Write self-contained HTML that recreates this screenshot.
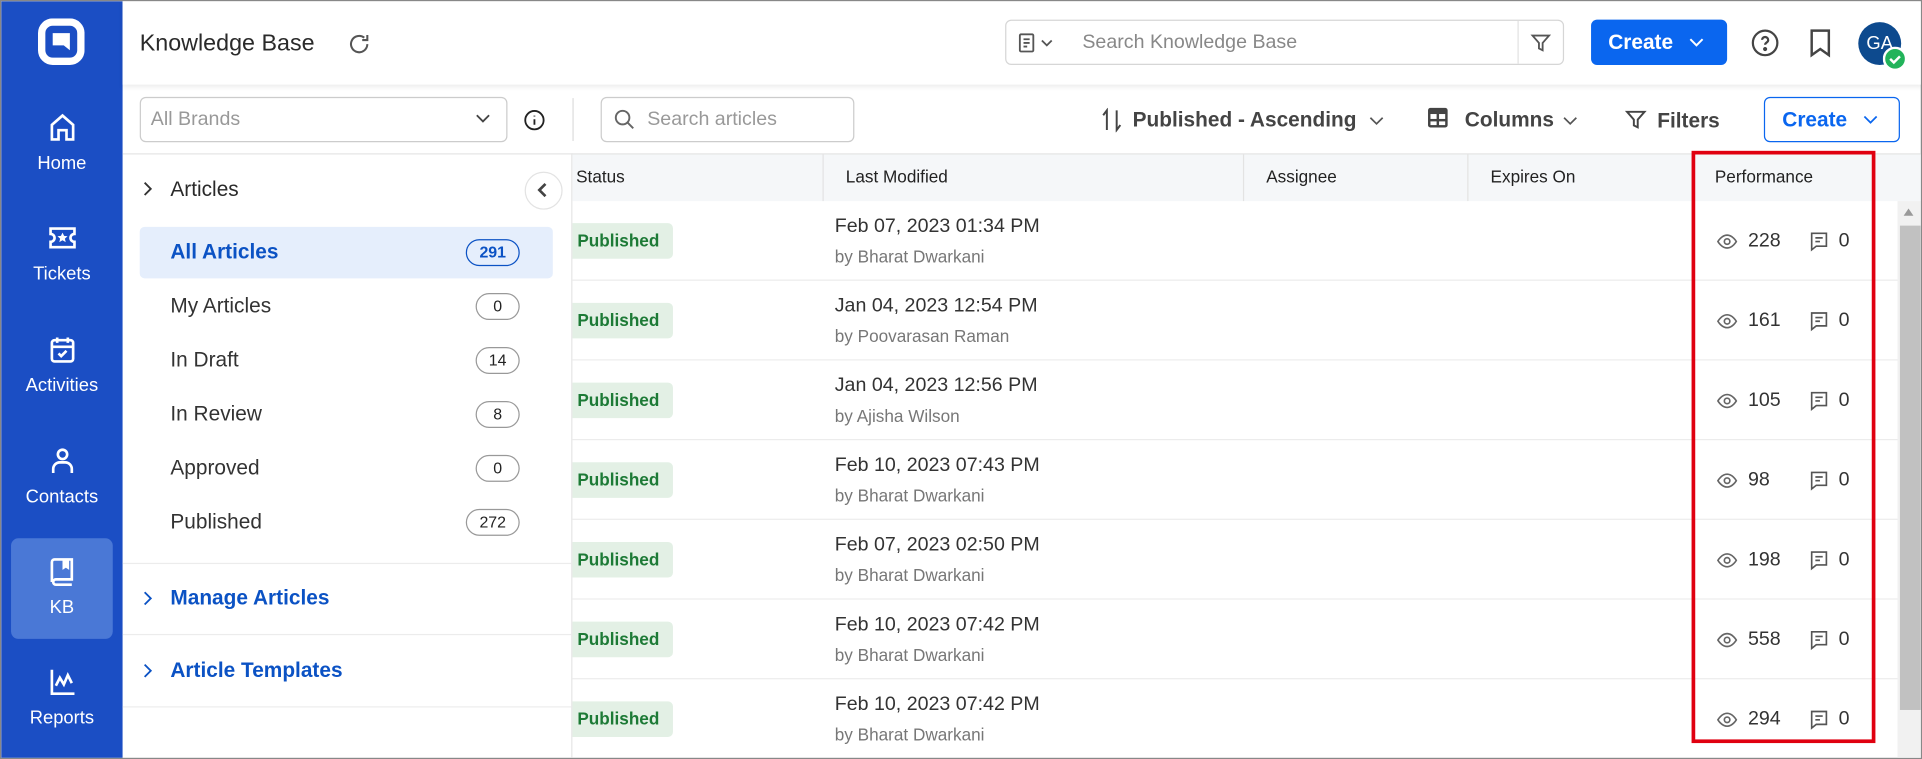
<!DOCTYPE html>
<html><head><meta charset="utf-8"><style>
*{box-sizing:border-box;margin:0;padding:0}
html,body{width:1922px;height:759px;overflow:hidden;background:#fff}
#w{position:absolute;left:0;top:0;width:1568px;height:619px;transform:scale(1.22577,1.2262);transform-origin:0 0;font-family:"Liberation Sans",sans-serif;color:#222;border:1px solid #888;overflow:hidden}
.a{position:absolute}
.sb{left:0;top:0;width:99px;height:619px;background:#1b4ec4}
.nav{position:absolute;left:0;width:99px;text-align:center;color:#fff;font-size:15px}
.nav svg{display:block;margin:0 auto}
.t{position:absolute;white-space:nowrap}
.badge{position:absolute;left:387px;width:36px;height:22px;border:1px solid #999;border-radius:11px;font-size:13px;text-align:center;line-height:20px;color:#222}
.pub{position:absolute;left:466px;width:82px;height:29px;background:#e3f0e5;color:#1d7a36;font-size:14px;font-weight:bold;line-height:29px;padding-left:4px;border-radius:0 4px 4px 0}
.d{position:absolute;left:680px;font-size:16px;color:#333}
.by{position:absolute;left:680px;font-size:14px;color:#777}
.hl{position:absolute;left:466px;width:1081px;height:1px;background:#ececec}
.num{position:absolute;font-size:16px;color:#333}
.eye{position:absolute;left:1398px}.cm{position:absolute;left:1474px}
</style></head><body><div id="w">
<div class="a sb"></div>
<svg class="a" style="left:30px;top:14px" width="38" height="38" viewBox="0 0 38 38"><rect x="3" y="3" width="32" height="32" rx="9" fill="none" stroke="#fff" stroke-width="6"/><path d="M12 12h14v14l-5-4h-9z" fill="#fff"/></svg>
<div class="nav" style="top:90px"><svg width="26" height="26" viewBox="0 0 24 24" fill="none" stroke="#fff" stroke-width="2"><path d="M4 21V10l8-7 8 7v11h-5v-7H9v7z"/></svg><div style="margin-top:8px">Home</div></div>
<div class="nav" style="top:180px"><svg width="26" height="26" viewBox="0 0 24 24" fill="none" stroke="#fff" stroke-width="2"><path d="M3 5h18v4a3 3 0 000 6v4H3v-4a3 3 0 000-6z"/><path d="M12 8l1.2 2.5 2.6.3-2 1.8.6 2.6-2.4-1.4-2.4 1.4.6-2.6-2-1.8 2.6-.3z" fill="#fff" stroke="none"/></svg><div style="margin-top:8px">Tickets</div></div>
<div class="nav" style="top:271px"><svg width="26" height="26" viewBox="0 0 24 24" fill="none" stroke="#fff" stroke-width="2"><rect x="4" y="5" width="16" height="16" rx="2"/><path d="M8 3v4M16 3v4M4 10h16M9 15l2 2 4-4"/></svg><div style="margin-top:8px">Activities</div></div>
<div class="nav" style="top:362px"><svg width="26" height="26" viewBox="0 0 24 24" fill="none" stroke="#fff" stroke-width="2"><circle cx="12" cy="7" r="3.5"/><path d="M5 21v-3a5 5 0 015-5h4a5 5 0 015 5v3"/></svg><div style="margin-top:8px">Contacts</div></div>
<div class="a" style="left:8px;top:438px;width:83px;height:82px;background:#4a78d6;border-radius:6px"></div>
<div class="nav" style="top:452px"><svg width="26" height="26" viewBox="0 0 24 24" fill="none" stroke="#fff" stroke-width="2"><path d="M6 3h13v15H7a2 2 0 000 4h12M6 3a2 2 0 00-2 2v15"/><path d="M13 3v6l1.5-1 1.5 1V3" fill="#fff"/></svg><div style="margin-top:8px">KB</div></div>
<div class="nav" style="top:542px"><svg width="26" height="26" viewBox="0 0 24 24" fill="none" stroke="#fff" stroke-width="2"><path d="M4 3v18h17M7 15l3-6 3 5 3-7 3 6"/></svg><div style="margin-top:8px">Reports</div></div>

<div class="a" style="left:99px;top:0;width:1469px;height:68px;background:#fff;box-shadow:0 2px 4px rgba(0,0,0,.08)"></div>
<div class="t" style="left:113px;top:24px;font-size:19px;color:#2a2a2a">Knowledge Base</div>
<svg class="a" style="left:282px;top:25px" width="20" height="20" viewBox="0 0 24 24" fill="none" stroke="#555" stroke-width="2"><path d="M20 12a8 8 0 11-3-6.3M20 3v5h-5"/></svg>
<div class="a" style="left:819px;top:15px;width:456px;height:37px;border:1px solid #d6d6d6;border-radius:5px"></div>
<svg class="a" style="left:830px;top:26px" width="30" height="16" viewBox="0 0 30 16" fill="none" stroke="#555" stroke-width="1.5"><rect x="1" y="1" width="11" height="14" rx="1"/><path d="M4 5h5M4 8h5M4 11h3M19 6l4 4 4-4"/></svg>
<div class="t" style="left:882px;top:25px;font-size:16px;color:#888">Search Knowledge Base</div>
<div class="a" style="left:1237px;top:16px;width:1px;height:35px;background:#e2e2e2"></div>
<svg class="a" style="left:1247px;top:25px" width="18" height="18" viewBox="0 0 24 24" fill="none" stroke="#555" stroke-width="2"><path d="M3 4h18l-7 8v8l-4-2v-6z"/></svg>
<div class="a" style="left:1297px;top:15px;width:111px;height:37px;background:#0a66ef;border-radius:5px;color:#fff;font-size:17px;font-weight:bold;line-height:37px;padding-left:14px">Create</div>
<svg class="a" style="left:1377px;top:29px" width="12" height="9" viewBox="0 0 12 9" fill="none" stroke="#fff" stroke-width="1.6"><path d="M1 2l5 5 5-5"/></svg>
<svg class="a" style="left:1427px;top:22px" width="24" height="24" viewBox="0 0 24 24" fill="none" stroke="#444" stroke-width="1.8"><circle cx="12" cy="12" r="10"/><path d="M9.5 9.5a2.5 2.5 0 115 .3c0 1.7-2.5 2-2.5 3.7"/><circle cx="12" cy="17" r=".8" fill="#444"/></svg>
<svg class="a" style="left:1474px;top:22px" width="20" height="24" viewBox="0 0 20 24" fill="none" stroke="#444" stroke-width="2"><path d="M3 2h14v20l-7-5-7 5z"/></svg>
<div class="a" style="left:1515px;top:17px;width:35px;height:35px;border-radius:50%;background:#0d4a8e;color:#fff;font-size:15px;line-height:35px;text-align:center">GA</div>
<svg class="a" style="left:1535px;top:37px" width="20" height="20" viewBox="0 0 20 20"><circle cx="10" cy="10" r="9" fill="#22b35a" stroke="#fff" stroke-width="2"/><path d="M6 10l3 3 5-5" fill="none" stroke="#fff" stroke-width="2"/></svg>

<div class="a" style="left:113px;top:78px;width:300px;height:37px;border:1px solid #ccc;border-radius:5px"></div>
<div class="t" style="left:122px;top:88px;font-size:16px;color:#999">All Brands</div>
<svg class="a" style="left:386px;top:90px" width="14" height="12" viewBox="0 0 14 12" fill="none" stroke="#444" stroke-width="1.5"><path d="M2 3l5 5 5-5"/></svg>
<svg class="a" style="left:426px;top:88px" width="18" height="18" viewBox="0 0 24 24" fill="none" stroke="#222" stroke-width="2"><circle cx="12" cy="12" r="10"/><path d="M12 11v6M12 7v1"/></svg>
<div class="a" style="left:466px;top:79px;width:1px;height:35px;background:#ddd"></div>
<div class="a" style="left:489px;top:78px;width:207px;height:37px;border:1px solid #ccc;border-radius:5px"></div>
<svg class="a" style="left:499px;top:87px" width="19" height="19" viewBox="0 0 24 24" fill="none" stroke="#666" stroke-width="2"><circle cx="10" cy="10" r="7"/><path d="M15 15l6 6"/></svg>
<div class="t" style="left:527px;top:88px;font-size:16px;color:#999">Search articles</div>
<svg class="a" style="left:897px;top:87px" width="18" height="20" viewBox="0 0 18 20" fill="none" stroke="#444" stroke-width="1.6"><path d="M5 18V2L2 6M13 2v16l3-4"/></svg>
<div class="t" style="left:923px;top:87px;font-size:17px;color:#444;font-weight:bold">Published - Ascending</div>
<svg class="a" style="left:1116px;top:93px" width="12" height="9" viewBox="0 0 12 9" fill="none" stroke="#555" stroke-width="1.4"><path d="M1 2l5 5 5-5"/></svg>
<svg class="a" style="left:1163px;top:86px" width="18" height="18" viewBox="0 0 18 18"><rect x="1" y="1" width="16" height="16" rx="2" fill="#444"/><rect x="3" y="6" width="5" height="4" fill="#fff"/><rect x="10" y="6" width="5" height="4" fill="#fff"/><rect x="3" y="12" width="5" height="3" fill="#fff"/><rect x="10" y="12" width="5" height="3" fill="#fff"/></svg>
<div class="t" style="left:1194px;top:87px;font-size:17px;color:#444;font-weight:bold">Columns</div>
<svg class="a" style="left:1274px;top:93px" width="12" height="9" viewBox="0 0 12 9" fill="none" stroke="#555" stroke-width="1.4"><path d="M1 2l5 5 5-5"/></svg>
<svg class="a" style="left:1324px;top:87px" width="19" height="19" viewBox="0 0 24 24" fill="none" stroke="#444" stroke-width="2"><path d="M3 4h18l-7 8v8l-4-2v-6z"/></svg>
<div class="t" style="left:1351px;top:88px;font-size:17px;color:#444;font-weight:bold">Filters</div>
<div class="a" style="left:1438px;top:78px;width:111px;height:37px;border:1px solid #0a66ef;border-radius:5px;color:#0a66ef;font-size:17px;font-weight:bold;line-height:35px;padding-left:14px">Create</div>
<svg class="a" style="left:1519px;top:92px" width="12" height="9" viewBox="0 0 12 9" fill="none" stroke="#0a66ef" stroke-width="1.4"><path d="M1 2l5 5 5-5"/></svg>

<div class="a" style="left:99px;top:124px;width:1469px;height:1px;background:#e4e4e4"></div>
<div class="a" style="left:465px;top:124px;width:1px;height:495px;background:#e6e6e6"></div>
<svg class="a" style="left:114px;top:146px" width="12" height="14" viewBox="0 0 12 14" fill="none" stroke="#333" stroke-width="1.5"><path d="M3 2l5 5-5 5"/></svg>
<div class="t" style="left:138px;top:144px;font-size:17px;color:#2a2a2a">Articles</div>
<div class="a" style="left:427px;top:139px;width:31px;height:31px;border-radius:50%;border:1px solid #e3e3e3;background:#fff"></div>
<svg class="a" style="left:436px;top:147px" width="12" height="14" viewBox="0 0 12 14" fill="none" stroke="#444" stroke-width="2.2"><path d="M8 2L3 7l5 5"/></svg>
<div class="a" style="left:113px;top:184px;width:337px;height:42px;background:#e5eefc;border-radius:4px"></div>
<div class="t" style="left:138px;top:195px;font-size:17px;color:#0b52c4;font-weight:bold">All Articles</div>
<div class="badge" style="left:379px;top:194px;width:44px;border-color:#0b52c4;color:#0b52c4;font-weight:bold">291</div>
<div class="t" style="left:138px;top:239px;font-size:17px;color:#333">My Articles</div><div class="badge" style="top:238px">0</div>
<div class="t" style="left:138px;top:283px;font-size:17px;color:#333">In Draft</div><div class="badge" style="top:282px">14</div>
<div class="t" style="left:138px;top:327px;font-size:17px;color:#333">In Review</div><div class="badge" style="top:326px">8</div>
<div class="t" style="left:138px;top:371px;font-size:17px;color:#333">Approved</div><div class="badge" style="top:370px">0</div>
<div class="t" style="left:138px;top:415px;font-size:17px;color:#333">Published</div><div class="badge" style="left:379px;width:44px;top:414px">272</div>
<div class="a" style="left:99px;top:458px;width:366px;height:1px;background:#ececec"></div>
<svg class="a" style="left:114px;top:480px" width="12" height="14" viewBox="0 0 12 14" fill="none" stroke="#0b52c4" stroke-width="1.5"><path d="M3 2l5 5-5 5"/></svg>
<div class="t" style="left:138px;top:477px;font-size:17px;color:#0b52c4;font-weight:bold">Manage Articles</div>
<div class="a" style="left:99px;top:516px;width:366px;height:1px;background:#ececec"></div>
<svg class="a" style="left:114px;top:539px" width="12" height="14" viewBox="0 0 12 14" fill="none" stroke="#0b52c4" stroke-width="1.5"><path d="M3 2l5 5-5 5"/></svg>
<div class="t" style="left:138px;top:536px;font-size:17px;color:#0b52c4;font-weight:bold">Article Templates</div>
<div class="a" style="left:99px;top:575px;width:366px;height:1px;background:#ececec"></div>

<div class="a" style="left:466px;top:125px;width:1102px;height:38px;background:#f5f7f9"></div>
<div class="a" style="left:670px;top:125px;width:1px;height:38px;background:#e3e3e3"></div>
<div class="a" style="left:1013px;top:125px;width:1px;height:38px;background:#e3e3e3"></div>
<div class="a" style="left:1196px;top:125px;width:1px;height:38px;background:#e3e3e3"></div>
<div class="t" style="left:469px;top:135px;font-size:14px;color:#222">Status</div>
<div class="t" style="left:689px;top:135px;font-size:14px;color:#222">Last Modified</div>
<div class="t" style="left:1032px;top:135px;font-size:14px;color:#222">Assignee</div>
<div class="t" style="left:1215px;top:135px;font-size:14px;color:#222">Expires On</div>
<div class="t" style="left:1398px;top:135px;font-size:14px;color:#222">Performance</div>

<div class="a" style="left:1547px;top:163px;width:21px;height:456px;background:#f1f1f1"></div>
<div class="a" style="left:1549px;top:183px;width:17px;height:395px;background:#c1c1c1"></div>
<svg class="a" style="left:1551px;top:168px" width="10" height="8" viewBox="0 0 10 8"><path d="M1 7l4-6 4 6z" fill="#999"/></svg>
</div>
<script>
(function(){var w=document.getElementById('w');var R=[["Feb 07, 2023 01:34 PM","Bharat Dwarkani","228"],["Jan 04, 2023 12:54 PM","Poovarasan Raman","161"],["Jan 04, 2023 12:56 PM","Ajisha Wilson","105"],["Feb 10, 2023 07:43 PM","Bharat Dwarkani","98"],["Feb 07, 2023 02:50 PM","Bharat Dwarkani","198"],["Feb 10, 2023 07:42 PM","Bharat Dwarkani","558"],["Feb 10, 2023 07:42 PM","Bharat Dwarkani","294"]];var h='';R.forEach(function(r,i){var c=195+65*i;h+='<div class="pub" style="top:'+(c-14)+'px">Published</div><div class="d" style="top:'+(c-20)+'px">'+r[0]+'</div><div class="by" style="top:'+(c+5)+'px">by '+r[1]+'</div>'+'<svg class="eye" style="top:'+(c-8)+'px" width="20" height="18" viewBox="0 0 24 24" fill="none" stroke="#666" stroke-width="1.8"><path d="M2 12s4-7 10-7 10 7 10 7-4 7-10 7S2 12 2 12z"/><circle cx="12" cy="12" r="3"/></svg><div class="num" style="left:1425px;top:'+(c-8)+'px">'+r[2]+'</div><svg class="cm" style="top:'+(c-8)+'px" width="18" height="18" viewBox="0 0 24 24" fill="none" stroke="#555" stroke-width="1.8"><path d="M4 3h16v14H9l-5 4z"/><path d="M8 8h8M8 12h5"/></svg><div class="num" style="left:1499px;top:'+(c-8)+'px">0</div>';if(i<6)h+='<div class="hl" style="top:'+(c+32)+'px"></div>';});h+='<div class="a" style="left:1379px;top:122px;width:150px;height:483px;border:3px solid #e00010"></div>';w.insertAdjacentHTML('beforeend',h);})();
</script>
</body></html>
